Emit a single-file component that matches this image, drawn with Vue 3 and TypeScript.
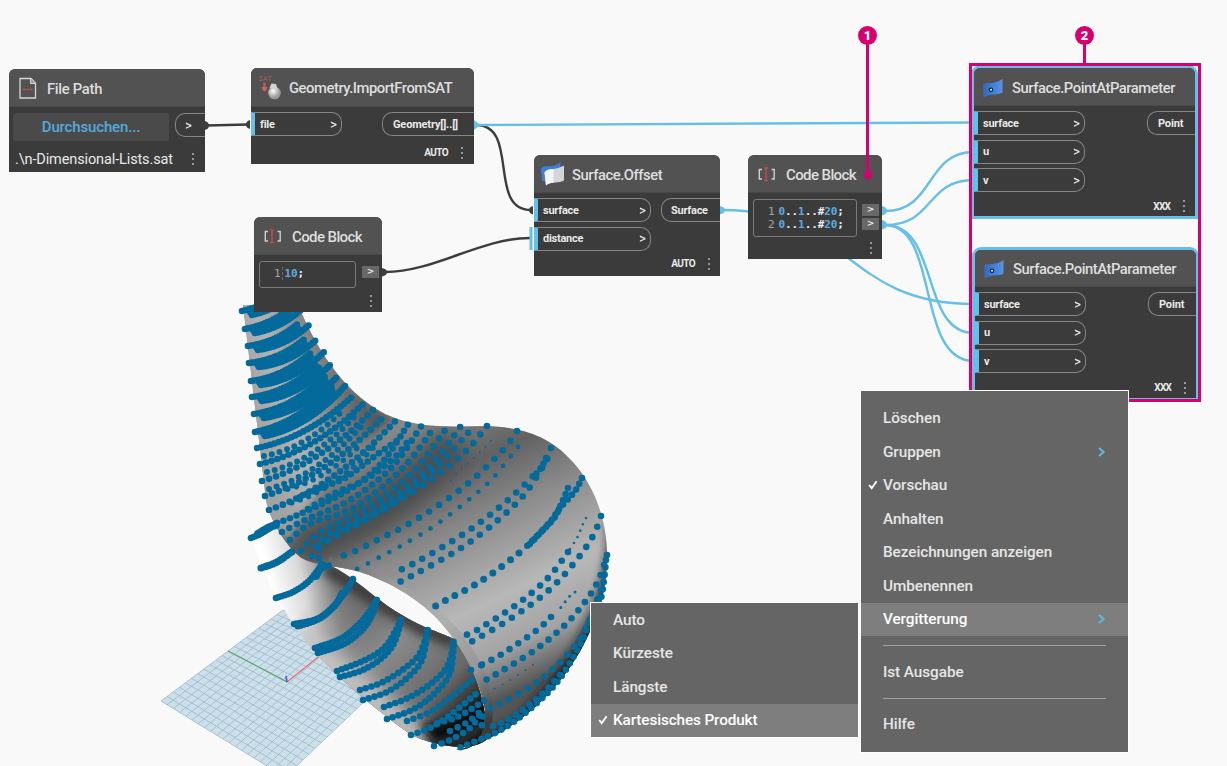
<script setup lang="ts">
type Pt = [number, number]

interface Port { name: string }
interface GraphNode {
  id: string
  kind: 'file' | 'function' | 'code'
  title: string
  icon: 'file' | 'sat' | 'offset' | 'point' | 'code'
  x: number
  y: number
  w: number
  h: number
  head: number
  inW?: number
  outW?: number
  inputs?: Port[]
  output?: string
  lacing?: string
  lines?: string[]
  selected?: boolean
}

const nodes: GraphNode[] = [
  { id: 'path', kind: 'file', title: 'File Path', icon: 'file', x: 9, y: 69, w: 196, h: 103, head: 38 },
  { id: 'import', kind: 'function', title: 'Geometry.ImportFromSAT', icon: 'sat', x: 251, y: 68, w: 223, h: 96, head: 39, inW: 91, outW: 92, inputs: [{ name: 'file' }], output: 'Geometry[]..[]', lacing: 'AUTO' },
  { id: 'code-a', kind: 'code', title: 'Code Block', icon: 'code', x: 254, y: 217, w: 128, h: 95, head: 38, lines: ['10'] },
  { id: 'offset', kind: 'function', title: 'Surface.Offset', icon: 'offset', x: 534, y: 155, w: 186, h: 121, head: 38, inW: 117, outW: 59, inputs: [{ name: 'surface' }, { name: 'distance' }], output: 'Surface', lacing: 'AUTO' },
  { id: 'code-b', kind: 'code', title: 'Code Block', icon: 'code', x: 748, y: 155, w: 134, h: 104, head: 38, lines: ['a', 'b'] },
  { id: 'pap-a', kind: 'function', title: 'Surface.PointAtParameter', icon: 'point', x: 974, y: 68, w: 221, h: 148, head: 38, inW: 111, outW: 48, inputs: [{ name: 'surface' }, { name: 'u' }, { name: 'v' }], output: 'Point', lacing: 'XXX', selected: true },
  { id: 'pap-b', kind: 'function', title: 'Surface.PointAtParameter', icon: 'point', x: 975, y: 250, w: 221, h: 148, head: 37, inW: 111, outW: 48, inputs: [{ name: 'surface' }, { name: 'u' }, { name: 'v' }], output: 'Point', lacing: 'XXX', selected: true },
]

const box = (n: GraphNode) => ({ left: n.x + 'px', top: n.y + 'px', width: n.w + 'px', height: n.h + 'px' })

interface MenuRow { label?: string; arrow?: boolean; check?: boolean; active?: boolean }
const menu: MenuRow[] = [
  { label: 'Löschen' },
  { label: 'Gruppen', arrow: true },
  { label: 'Vorschau', check: true },
  { label: 'Anhalten' },
  { label: 'Bezeichnungen anzeigen' },
  { label: 'Umbenennen' },
  { label: 'Vergitterung', arrow: true, active: true },
  {},
  { label: 'Ist Ausgabe' },
  {},
  { label: 'Hilfe' },
]
const submenu: MenuRow[] = [
  { label: 'Auto' },
  { label: 'Kürzeste' },
  { label: 'Längste' },
  { label: 'Kartesisches Produkt', check: true, active: true },
]

const darkWires = [
  'M207,125.5 L248,124.5',
  'M476,125 C520,125 487,210 531,210',
  'M385,272 C435,272 480,238 530,238',
]
const blueWires = [
  'M476,125 L974,122.5',
  'M723,210 C850,210 843,304 974,304',
  'M885,211 C935,211 925,152 974,152',
  'M885,225 C935,225 925,180 974,180',
  'M885,225 C940,225 920,333 974,333',
  'M885,225 C940,225 915,361 974,361',
]

/* Ground plane: bilinear interpolation between its four corners. */
const corners: Pt[] = [[283, 610], [161, 701], [285, 777], [405, 663]]
const lerp = (a: Pt, b: Pt, t: number): Pt => [a[0] + (b[0] - a[0]) * t, a[1] + (b[1] - a[1]) * t]
function gridPath(count: number): string {
  const [a, b, c, d] = corners
  let out = ''
  for (let i = 0; i <= count; i++) {
    const t = i / count
    const [p, q, r, s] = [lerp(a, b, t), lerp(d, c, t), lerp(a, d, t), lerp(b, c, t)]
    out += `M${p[0].toFixed(1)},${p[1].toFixed(1)}L${q[0].toFixed(1)},${q[1].toFixed(1)}`
    out += `M${r[0].toFixed(1)},${r[1].toFixed(1)}L${s[0].toFixed(1)},${s[1].toFixed(1)}`
  }
  return out
}
const majorGrid = gridPath(20)
const minorGrid = gridPath(100)

/* Smooth curve through the points of one sample row. */
function curve(pts: Pt[]): string {
  let out = `M${pts[0][0]},${pts[0][1]}`
  for (let i = 0; i < pts.length - 1; i++) {
    const p0 = pts[Math.max(0, i - 1)]
    const [p1, p2] = [pts[i], pts[i + 1]]
    const p3 = pts[Math.min(pts.length - 1, i + 2)]
    const c = [p1[0] + (p2[0] - p0[0]) / 6, p1[1] + (p2[1] - p0[1]) / 6, p2[0] - (p3[0] - p1[0]) / 6, p2[1] - (p3[1] - p1[1]) / 6]
    out += `C${c.map(v => v.toFixed(1)).join(',')},${p2[0]},${p2[1]}`
  }
  return out
}

interface Row { d: string; gap: number; size: number }
const rows: Row[] = []
const add = (pts: Pt[], gap: number, size = 6.6) => rows.push({ d: curve(pts), gap, size })
const arc = (s: Pt, e: Pt, sag: number, gap: number, size: number) =>
  rows.push({ d: `M${s}Q${(s[0] + e[0]) / 2 + 3},${(s[1] + e[1]) / 2 + sag} ${e}`, gap, size })

/* Rows across the narrow trunk, from its left edge to the upper silhouette. */
const trunkStart: Pt[] = [[242, 311], [245, 329], [248, 346], [249, 363], [251, 381], [252, 397], [254, 414], [255, 432], [257, 448], [260, 464], [262, 481], [265, 496], [269, 510]]
const trunkEnd: Pt[] = [[296, 292], [303, 308], [310, 324], [317, 339], [324, 352], [331, 364], [338, 376], [345, 386], [354, 395], [364, 403], [374, 409], [385, 415], [397, 419]]
trunkStart.forEach((s, i) => {
  const e = trunkEnd[i]
  const sag = 4 + i * 1.5
  const thick = i < 8
  arc(s, thick ? [e[0] - 13, e[1] + 0.5] : e, sag, thick ? 3 : i < 9 ? 4.5 : i < 10 ? 6 : 7.4, 6.6)
  if (thick) {
    arc([s[0] + 10, s[1] + 4], e, sag + 2, 3, 6.6)
    arc([s[0] + 9, s[1] + 1], [e[0] - 12, e[1] + 4], sag + 1, 3, 8)
  } else if (i < 11) {
    arc([s[0] + 7, s[1] + 8], [e[0] - 9, e[1] + 13], sag, 8, 6)
  } else {
    arc([s[0] + 14, s[1] - 5], [e[0] - 22, e[1] + 27], sag - 4, 9, 5.6)
  }
})

/* Rows which fan out of the fold. */
add([[277, 523], [300, 514], [345, 492], [380, 465], [409, 423]], 7)
add([[282, 532], [305, 520], [350, 500], [392, 467], [422, 425]], 8.5)
add([[290, 540], [310, 524], [355, 507], [403, 468], [435, 426]], 9)
add([[301, 551], [320, 532], [365, 509], [413, 472], [448, 426]], 9.5)
add([[312, 556], [325, 537], [370, 513], [423, 474], [461, 426]], 10)
add([[318, 545], [345, 530], [385, 508], [434, 470], [474, 426]], 10.5)
add([[487, 426], [467, 450], [437, 475], [400, 500], [368, 519], [343, 532], [318, 550], [323, 564]], 11)
add([[300, 497], [320, 488], [345, 478], [375, 456], [398, 440]], 7)
add([[308, 509], [335, 493], [365, 480], [395, 457], [411, 437]], 8)

/* Rows over the bulging body. */
add([[517, 431], [503, 450], [471, 481], [436, 507], [403, 527], [379, 539], [353, 552], [337, 557]], 12)
add([[518, 447], [493, 478], [472, 497], [437, 524], [406, 543], [382, 556], [355, 570]], 12, 4.8)
add([[551, 448], [545, 463], [529, 480], [501, 506], [465, 533], [420, 560], [394, 573]], 11.5)
add([[542, 468], [524, 495], [497, 521], [461, 548], [417, 573], [392, 586]], 11.5)
add([[546, 458], [541, 468], [535, 475]], 6)
add([[491, 441], [477, 455], [462, 468], [450, 481]], 8, 2)
add([[582, 478], [575, 491], [560, 508], [550, 522], [528, 546]], 6.5)
add([[568, 488], [563, 500], [555, 517], [543, 530], [525, 548]], 6.5)
add([[519, 553], [493, 573], [471, 587], [448, 599], [427, 611]], 11, 7)
add([[601, 516], [593, 536], [575, 562], [548, 591], [510, 619], [464, 646]], 11.5)
add([[586, 518], [582, 526], [577, 538], [568, 552]], 7, 2.6)
add([[568, 552], [547, 579], [516, 605], [477, 630], [466, 635]], 11)
add([[607, 555], [601, 574], [590, 595], [567, 623], [535, 650], [493, 676], [481, 682]], 10.5)
add([[575, 592], [569, 597], [558, 611]], 7, 3)
add([[551, 617], [537, 630], [502, 654], [481, 665]], 10.5)
add([[606, 560], [604, 580], [600, 602], [590, 621], [580, 645], [558, 681], [530, 709], [499, 731], [456, 749]], 7.4)
add([[601, 590], [585, 630], [567, 655], [537, 682], [498, 705], [483, 709]], 10.5)
add([[560, 675], [541, 695], [521, 711], [503, 722], [488, 728]], 8.5)
add([[533, 665], [507, 682], [487, 692]], 9, 2)

/* Rows around the lower tube. */
add([[251, 538], [262, 533], [277, 523]], 2, 6.6)
add([[258, 534], [268, 528], [276, 525]], 2, 8)
add([[261, 568], [277, 562], [293, 551]], 2.5, 7.2)
add([[276, 598], [293, 592], [308, 582], [319, 570], [330, 565]], 3)
add([[316, 576], [319, 570], [323, 564]], 3, 8)
add([[294, 624], [317, 619], [333, 607], [346, 591], [353, 579]], 3)
add([[298, 626], [320, 618], [336, 604], [343, 591]], 3, 7.2)
add([[315, 648], [340, 639], [358, 625], [370, 611], [377, 599]], 3.5)
add([[318, 653], [344, 644], [362, 630], [372, 615], [377, 599]], 3.5, 6.6)
add([[337, 671], [363, 661], [383, 649], [396, 630], [402, 616]], 5)
add([[340, 677], [363, 670], [383, 657], [395, 641], [402, 616]], 5)
add([[360, 690], [383, 682], [405, 668], [420, 653], [428, 629]], 6)
add([[363, 700], [387, 692], [407, 678], [422, 660], [428, 629]], 6)
add([[384, 707], [410, 697], [433, 682], [448, 665], [454, 640]], 6)
add([[387, 719], [412, 710], [433, 695], [450, 673], [454, 640]], 6)
add([[407, 721], [430, 712], [450, 698], [472, 680]], 7)
add([[411, 735], [430, 728], [450, 715], [477, 693]], 7)
add([[434, 746], [450, 740], [470, 728], [483, 710]], 8)
add([[437, 723], [455, 718], [473, 708], [485, 700]], 7.5)
add([[450, 731], [468, 722], [482, 712], [481, 732]], 8.5)
add([[471, 670], [482, 665]], 11)
</script>

<template>
  <main class="canvas">
    <svg class="scene" width="1227" height="766" viewBox="0 0 1227 766">
      <defs>
        <linearGradient id="trunk" gradientUnits="userSpaceOnUse" x1="250" y1="420" x2="365" y2="385">
          <stop offset="0" stop-color="#a2a2a2" /><stop offset=".35" stop-color="#b2b2b2" /><stop offset="1" stop-color="#555" />
        </linearGradient>
        <linearGradient id="body" gradientUnits="userSpaceOnUse" x1="395" y1="430" x2="520" y2="690">
          <stop offset="0" stop-color="#888" /><stop offset=".22" stop-color="#626262" /><stop offset=".42" stop-color="#8c8c8c" /><stop offset=".68" stop-color="#b8b8b8" /><stop offset=".85" stop-color="#a4a4a4" /><stop offset="1" stop-color="#555" />
        </linearGradient>
        <linearGradient id="tube" gradientUnits="userSpaceOnUse" x1="275" y1="600" x2="375" y2="575">
          <stop offset="0" stop-color="#fff" /><stop offset=".3" stop-color="#d8d8d8" /><stop offset=".6" stop-color="#777" /><stop offset="1" stop-color="#333" />
        </linearGradient>
        <linearGradient id="tubeFade" gradientUnits="userSpaceOnUse" x1="310" y1="600" x2="450" y2="735">
          <stop offset="0" stop-color="#888" stop-opacity="0" /><stop offset=".45" stop-color="#8c8c8c" /><stop offset=".8" stop-color="#686868" /><stop offset="1" stop-color="#222" />
        </linearGradient>
        <linearGradient id="rim" gradientUnits="userSpaceOnUse" x1="330" y1="565" x2="485" y2="740">
          <stop offset="0" stop-color="#6c6c6c" /><stop offset=".25" stop-color="#9c9c9c" /><stop offset=".5" stop-color="#b0b0b0" /><stop offset=".75" stop-color="#969696" /><stop offset=".95" stop-color="#3c3c3c" />
        </linearGradient>
        <filter id="soft" x="-50%" y="-50%" width="200%" height="200%"><feGaussianBlur stdDeviation="10" /></filter>
        <filter id="soft2" x="-50%" y="-50%" width="200%" height="200%"><feGaussianBlur stdDeviation="5" /></filter>
        <clipPath id="bodyClip"><path d="M243,305 L298,305 C315,345 340,390 385,414 C420,430 455,426 487,426 C520,427 548,436 568,457 C594,482 607,520 607,555 C607,580 603,604 592,627 C570,680 520,735 456,750 C475,750 485,740 485,710 C482,690 470,660 453,638 C430,605 397,585 363,573 C340,565 315,567 300,557 C285,545 270,520 266,500 Z" /></clipPath>
        <clipPath id="tubeClip"><path d="M251,537 L277,520 L300,552 L328,565 C350,572 375,600 402,615 C425,629 440,632 454,639 C474,662 489,710 486,740 C470,753 430,745 410,734 C375,709 340,680 314,652 C290,623 267,585 251,537 Z" /></clipPath>
      </defs>

      <g>
        <path d="M283,610 L161,701 L285,777 L405,663 Z" fill="#d3e5ee" />
        <path :d="minorGrid" stroke="#a9c9d8" stroke-width=".35" opacity=".5" />
        <path :d="majorGrid" stroke="#86a3b1" stroke-width=".7" opacity=".75" />
        <path d="M287,682 L228,651" stroke="#55a765" stroke-width="1.1" />
        <path d="M287,682 L322,654" stroke="#ee6b74" stroke-width="1.2" />
        <path d="M287,682 L286,676" stroke="#4b55ee" stroke-width="1.6" />
      </g>

      <g clip-path="url(#tubeClip)">
        <rect x="240" y="510" width="260" height="250" fill="url(#tube)" />
        <rect x="240" y="510" width="260" height="250" fill="url(#tubeFade)" />
        <path d="M300,640 L360,690 L425,745" stroke="#c8c8c8" stroke-width="26" fill="none" filter="url(#soft)" />
        <path d="M325,568 C350,580 380,605 420,628 L455,642" stroke="#3c3c3c" stroke-width="14" fill="none" filter="url(#soft2)" />
        <path d="M420,724 C445,726 470,712 492,694 L492,752 L440,750 Z" fill="#0c0c0c" filter="url(#soft2)" />
        <path d="M436,745 C455,742 470,738 482,724" stroke="#666" stroke-width="4" fill="none" filter="url(#soft2)" />
      </g>

      <g clip-path="url(#bodyClip)">
        <rect x="235" y="300" width="390" height="460" fill="url(#body)" />
        <path d="M235,300 L305,300 C320,350 350,400 395,418 L330,470 L290,540 L260,520 Z" fill="url(#trunk)" filter="url(#soft2)" />
        <path d="M300,552 C350,530 410,500 455,440" stroke="#4d4d4d" stroke-width="38" fill="none" filter="url(#soft)" />
        <path d="M617,520 C618,590 590,660 520,726 L450,760" stroke="#1c1c1c" stroke-width="17" fill="none" filter="url(#soft2)" />
        <path d="M328,563 C380,573 430,605 456,636 C480,665 492,700 484,742" stroke="url(#rim)" stroke-width="12" fill="none" />
      </g>

      <g class="dots">
        <path v-for="(r, i) in rows" :key="i" :d="r.d" :stroke-width="r.size" :stroke-dasharray="`0 ${r.gap}`" />
      </g>

      <g class="wires">
        <path v-for="d in darkWires" :key="d" :d="d" stroke="#3d3d3d" />
        <path v-for="d in blueWires" :key="d" :d="d" stroke="#66bfe8" />
        <path d="M205,121 q4,1 4,4.500 q0,3.500 -4,4.500z M250,120 q-4,1 -4,4.500 q0,3.500 4,4.500z M533,206 q-4,1 -4,4 q0,3.500 4,4.500z M382,268 q5,1 5,4 q0,3.500 -5,4.500z" fill="#3d3d3d" />
        <path d="M474,120 l5,4 v2 l-5,4z M720,206 q5,1 5,4 q0,3.500 -5,4.500z M882,206 q5,1 5,5 q0,3.500 -5,4.500z M882,220 q5,1 5,5 q0,3.500 -5,4.500z" fill="#66bfe8" />
        <rect x="529.500" y="227" width="3" height="23" fill="#66bfe8" />
      </g>
    </svg>

    <article v-for="n in nodes" :key="n.id" class="node" :class="[n.kind, n.id, { selected: n.selected }]" :style="box(n)">
      <header :style="{ height: n.head + 'px' }">
        <svg v-if="n.icon === 'file'" class="ico" width="28" height="28" viewBox="0 0 28 28">
          <path d="M6 4.500h11l4.500 4.500v15h-15.500z" fill="none" stroke="#d6d6d6" stroke-width="1.300" /><path d="M16.500 4.500v5h5" fill="#999" stroke="#d6d6d6" />
          <path d="M9 15.500h2.500m1 0h2.500m1 0h2.500" stroke="#c6504d" stroke-width="1.500" />
        </svg>
        <svg v-else-if="n.icon === 'sat'" class="ico" width="28" height="28" viewBox="0 0 28 28">
          <defs><radialGradient id="ball" cx=".4" cy=".35"><stop offset="0" stop-color="#fff" /><stop offset="1" stop-color="#9a9a9a" /></radialGradient></defs>
          <text x="2.500" y="7.500" font-size="7" fill="#ad5f5b" font-style="italic" textLength="13">SAT</text>
          <path d="M8.500 9.500v6" stroke="#b0605c" stroke-width="2.400" /><path d="M5.800 14h5.400l-.7 3-2 1.500-2-1.500z" fill="#d0625e" />
          <circle cx="18.500" cy="20" r="6.300" fill="url(#ball)" /><path d="M13.500 15l2-4.500 4.500 .5 1.500 5z" fill="#d2d2d2" />
        </svg>
        <svg v-else-if="n.icon === 'offset'" class="ico" width="28" height="28" viewBox="0 0 28 28">
          <path d="M2 9.500c1-3 3-3.200 8-3.200 5 0 7-1 11.500-4v6l-13 3-2 10.500-3.500-1z" fill="#3d7edb" />
          <path d="M5.500 12.500c2-3 5-3 9-3.500 4-.5 7-1.500 10.500-3.500v15c-4 2-8 2-11 2.300-3 .3-5 1-7 2.700z" fill="#d4d5d7" />
          <path d="M5.500 12.500c2-3 5-3 9-3.500v13.800c-3.500.3-5.500 1-7.500 2.700z" fill="#f4f4f4" />
        </svg>
        <svg v-else-if="n.icon === 'point'" class="ico" width="28" height="28" viewBox="0 0 28 28">
          <defs><linearGradient id="sheet"><stop offset="0" stop-color="#3567b5" /><stop offset=".5" stop-color="#3f7fdc" /><stop offset="1" stop-color="#5a94df" /></linearGradient></defs>
          <path d="M4 12c.5-2 3-1.500 8-2 5-.5 8-1.500 11.500-4v13.500c-4 2-8 1.800-11 2.300-3 .5-5 1-8 2.700z" fill="url(#sheet)" />
          <circle cx="12" cy="16.700" r="2.300" fill="#16263d" /><circle cx="12" cy="16.700" r="1" fill="#fff" />
        </svg>
        <svg v-else class="ico" width="28" height="28" viewBox="0 0 28 28">
          <path d="M9 9.500h-2.700v9.500h2.700M18.500 9.500h2.700v9.500h-2.700" fill="none" stroke="#cfcfcf" stroke-width="1.400" />
          <path d="M11 8h4m-2 0v12.500m-2 0h4" stroke="#cf4643" stroke-width="1.500" fill="none" />
        </svg>
        <h2>{{ n.title }}</h2>
      </header>

      <section v-if="n.kind === 'file'" class="file-body">
        <div class="browse-row"><button>Durchsuchen...</button><div class="out"><i>&gt;</i></div></div>
        <div class="path-row"><span>.\n-Dimensional-Lists.sat</span><b class="more"><i /><i /><i /></b></div>
      </section>

      <section v-else-if="n.kind === 'function'" class="fn-body">
        <div class="ports">
          <div class="ins" :style="{ width: n.inW + 'px' }">
            <div v-for="p in n.inputs" :key="p.name" class="in"><span>{{ p.name }}</span><i>&gt;</i></div>
          </div>
          <div class="out" :style="{ width: n.outW + 'px' }">{{ n.output }}</div>
        </div>
        <footer><span>{{ n.lacing }}</span><b class="more"><i /><i /><i /></b></footer>
      </section>

      <section v-else class="code-body">
        <div class="code-row">
          <div class="editor">
            <div v-for="(l, i) in n.lines" :key="l" class="line">
              <span class="no">{{ i + 1 }}</span>
              <code v-if="l === '10'" class="single"><em>10</em>;</code>
              <code v-else><em>0</em>..<em>1</em>..#<em>20</em>;</code>
            </div>
          </div>
          <div class="tags"><i v-for="l in n.lines" :key="l">&gt;</i></div>
        </div>
        <b class="more"><i /><i /><i /></b>
      </section>
    </article>

    <div class="frame" />
    <div class="pin one"><span>1</span></div>
    <div class="pin two"><span>2</span></div>

    <nav class="menu main">
      <template v-for="(m, i) in menu" :key="i">
        <div v-if="m.label" class="item" :class="{ active: m.active }">
          <svg v-if="m.check" class="check" width="10" height="10" viewBox="0 0 10 10"><path d="M1.200 5l2.500 3.200L8.600 1.200" /></svg>
          <span>{{ m.label }}</span>
          <svg v-if="m.arrow" class="arrow" width="8" height="10" viewBox="0 0 8 10"><path d="M1 1l4.600 4-4.600 4" /></svg>
        </div>
        <hr v-else>
      </template>
    </nav>
    <nav class="menu sub">
      <div v-for="m in submenu" :key="m.label" class="item" :class="{ active: m.active }">
        <svg v-if="m.check" class="check" width="10" height="10" viewBox="0 0 10 10"><path d="M1.200 5l2.500 3.200L8.600 1.200" /></svg>
        <span>{{ m.label }}</span>
      </div>
    </nav>
  </main>
</template>

<style>
body { margin: 0; background: #f9f9f9; }
</style>

<style scoped>
.canvas { position: relative; width: 1227px; height: 766px; overflow: hidden; background: #f9f9f9; font-family: Roboto, "Noto Sans", sans-serif; color: #e9e9e9; }
.scene { position: absolute; inset: 0; }
.dots path { fill: none; stroke: #046a9b; stroke-linecap: round; }
.wires > path[stroke] { fill: none; stroke-width: 2.4; }
i, em { font-style: normal; }
.node { position: absolute; box-sizing: border-box; border-radius: 6px 6px 0 0; background: #3b3b3b; overflow: hidden; display: flex; flex-direction: column; }
.node.selected { overflow: visible; box-shadow: 0 0 0 3px #66bfe8; }
header { flex: none; box-sizing: border-box; display: flex; align-items: center; background: #525252; border-bottom: 1px solid #494949; border-radius: 6px 6px 0 0; padding-left: 5px; }
.ico { flex: none; }
h2 { margin: 2px 0 0 5px; font-size: 14.800px; line-height: 20px; font-weight: 500; letter-spacing: -.46px; color: #dedede; white-space: nowrap; }
.path h2 { letter-spacing: -.3px; }
.import h2 { letter-spacing: -.46px; }
.code-a h2, .code-b h2 { letter-spacing: -.58px; }
.code-a h2, .code-b h2 { margin-left: 5px; letter-spacing: -.6px; font-size: 15px; }
.more { display: flex; flex-direction: column; gap: 3px; }
.more i { width: 2px; height: 2px; background: #b9b9b9; border-radius: 1px; }

.browse-row { display: flex; justify-content: space-between; padding: 6px 0 0 4px; }
button { width: 156px; height: 28px; border: 0; border-radius: 3px; padding: 0; background: #4a4a4a; color: #55a9dc; font: 500 15px/28px Roboto, sans-serif; letter-spacing: -.15px; }
.out { box-sizing: border-box; height: 24px; border: 1px solid #868686; border-right: 0; border-radius: 10px 0 0 10px; display: flex; align-items: center; padding-left: 10px; font-size: 11px; font-weight: 700; letter-spacing: -.15px; white-space: nowrap; }
.offset .out { padding-left: 9px; letter-spacing: -.25px; }
.browse-row .out { width: 30px; padding-left: 8px; }
.path-row { display: flex; align-items: center; justify-content: space-between; height: 36px; padding: 0 11px 0 6px; font-size: 14.500px; letter-spacing: -.12px; white-space: nowrap; }

.fn-body { flex: 1; display: flex; flex-direction: column; }
.ports { display: flex; justify-content: space-between; align-items: flex-start; padding-top: 5px; }
.ins { display: flex; flex-direction: column; gap: 4.500px; }
.in { box-sizing: border-box; height: 24px; border: 1px solid #868686; border-left: 4px solid #66bfe8; border-radius: 0 10px 10px 0; display: flex; align-items: center; justify-content: space-between; padding: 0 3px 0 5px; font-size: 11px; font-weight: 700; letter-spacing: -.25px; }
.in i, .browse-row i { font: 700 11px "DejaVu Sans", sans-serif; transform: scaleX(.8); }
footer { margin-top: auto; height: 23px; display: flex; align-items: center; justify-content: flex-end; gap: 13px; padding-right: 11px; font-size: 10px; font-weight: 700; letter-spacing: -.6px; }
.offset footer { height: 25px; padding-right: 10px; }
.pap-a footer, .pap-b footer { height: 21px; letter-spacing: -.8px; padding-right: 10px; }
.pap-a footer { height: 20px; }

.code-body { position: relative; flex: 1; display: flex; flex-direction: column; }
.code-row { display: flex; padding: 6px 3px 0 5px; justify-content: space-between; }
.editor { box-sizing: border-box; width: 97px; height: 27px; border: 1.500px solid #7b7b7b; border-radius: 3px; display: flex; flex-direction: column; justify-content: center; font: 11px/13px "DejaVu Sans Mono", monospace; letter-spacing: -.1px; }
.code-a .editor { padding-bottom: 3px; }
.code-b .editor { width: 104px; height: 38px; }
.line { display: flex; gap: 4px; padding-left: 14px; }
.no { color: #a6a6a6; }
code { font: inherit; color: #ececec; font-weight: 700; }
code em { color: #58ade0; }
code.single { border-left: 1px dashed #686868; padding-left: 2px; margin-left: -3px; }
.tags { display: flex; flex-direction: column; gap: 2px; padding-top: 5px; }
.tags i { width: 17px; height: 12px; background: #686868; font: 700 9px/11px "DejaVu Sans", sans-serif; text-align: center; }
.code-body .more { position: absolute; right: 10px; bottom: 5px; }

.frame { position: absolute; left: 969px; top: 63px; width: 226px; height: 333px; border: 3px solid #d6006e; }
.pin { position: absolute; width: 3px; background: #d6006e; }
.pin span { position: absolute; left: -8px; top: -10px; width: 19px; height: 19px; border-radius: 50%; background: #d6006e; color: #fff; text-align: center; font: 900 13px/19px Roboto, sans-serif; }
.one { left: 866px; top: 36px; height: 139px; }
.one::after { content: ""; position: absolute; left: -2.500px; bottom: -4px; width: 8px; height: 8px; border-radius: 50%; background: #d6006e; }
.two { left: 1083px; top: 36px; height: 28px; }

.menu { position: absolute; box-sizing: border-box; width: 267px; background: #656565; box-shadow: 0 0 0 1px #fff; }
.main { left: 861px; top: 391px; height: 361px; padding-top: 10.500px; }
.sub { left: 591px; top: 603px; height: 134px; }
.item { position: relative; box-sizing: border-box; height: 33.500px; display: flex; align-items: center; justify-content: space-between; padding: 0 22px .5px; font-size: 15.300px; font-weight: 500; color: #e6e6e6; letter-spacing: -.06px; }
.item.active { background: #7e7e7e; color: #fff; }
.sub .active { letter-spacing: -.12px; }
.check { position: absolute; left: 7px; }
.check path { fill: none; stroke: #fff; stroke-width: 1.900; }
.arrow path { fill: none; stroke: #5fb6ea; stroke-width: 2; }
hr { margin: 9px 22px; border: 0; height: 1px; background: #a0a0a0; }
</style>
